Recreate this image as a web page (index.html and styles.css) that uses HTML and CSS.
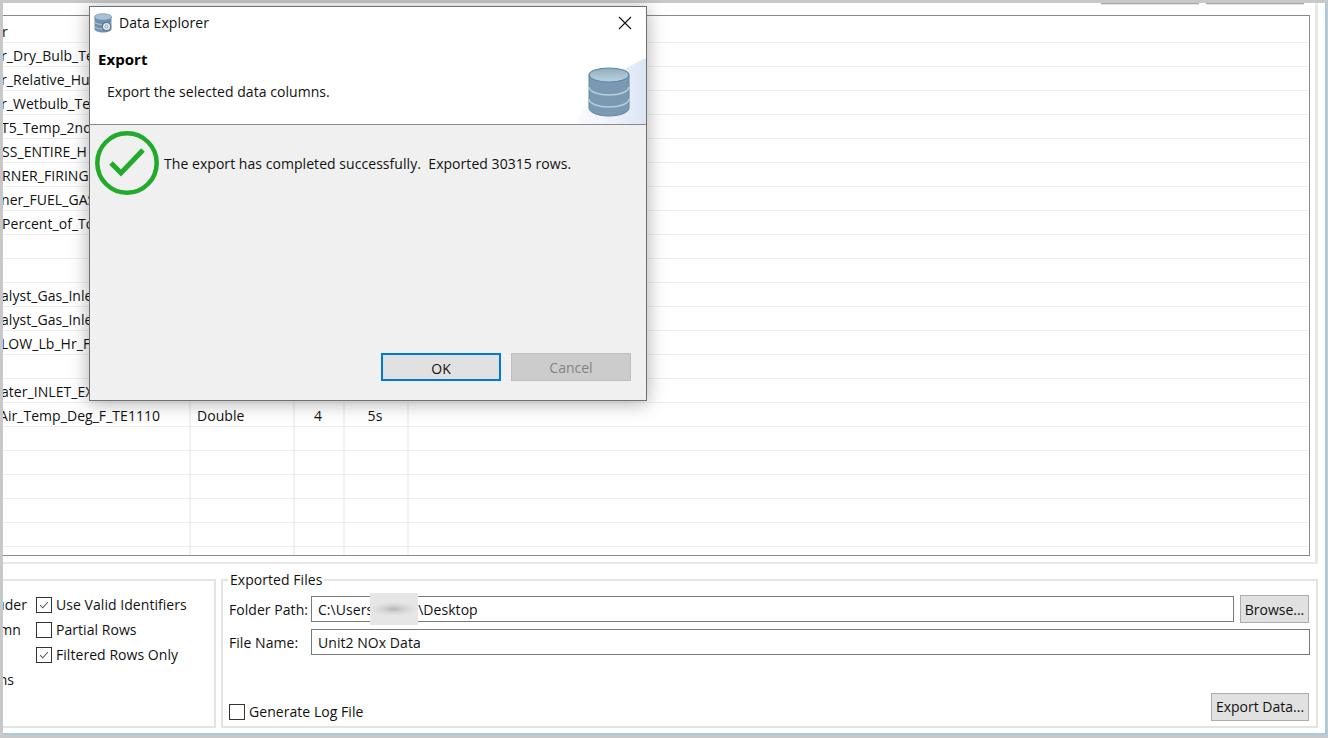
FILE: index.html
```html
<!DOCTYPE html>
<html lang="en">
<head>
<meta charset="utf-8">
<title>Data Explorer</title>
<link rel="stylesheet" href="styles.css">
</head>
<body>
<div class="window">
  <section class="upper">
    <div class="toolbar"><span class="tool-btn"></span><span class="tool-btn"></span></div>
    <div class="table">
      <div class="row"><div class="cell name">r</div><div class="cell"></div><div class="cell"></div><div class="cell"></div></div>
      <div class="row"><div class="cell name cut">r_Dry_Bulb_Te</div><div class="cell"></div><div class="cell"></div><div class="cell"></div></div>
      <div class="row"><div class="cell name cut">r_Relative_Hu</div><div class="cell"></div><div class="cell"></div><div class="cell"></div></div>
      <div class="row"><div class="cell name cut">r_Wetbulb_Te</div><div class="cell"></div><div class="cell"></div><div class="cell"></div></div>
      <div class="row"><div class="cell name cut">T5_Temp_2nd</div><div class="cell"></div><div class="cell"></div><div class="cell"></div></div>
      <div class="row"><div class="cell name">SS_ENTIRE_H</div><div class="cell"></div><div class="cell"></div><div class="cell"></div></div>
      <div class="row"><div class="cell name">RNER_FIRING</div><div class="cell"></div><div class="cell"></div><div class="cell"></div></div>
      <div class="row"><div class="cell name cut">ner_FUEL_GAS</div><div class="cell"></div><div class="cell"></div><div class="cell"></div></div>
      <div class="row"><div class="cell name">Percent_of_To</div><div class="cell"></div><div class="cell"></div><div class="cell"></div></div>
      <div class="row"><div class="cell name"></div><div class="cell"></div><div class="cell"></div><div class="cell"></div></div>
      <div class="row"><div class="cell name"></div><div class="cell"></div><div class="cell"></div><div class="cell"></div></div>
      <div class="row"><div class="cell name cut">alyst_Gas_Inle</div><div class="cell"></div><div class="cell"></div><div class="cell"></div></div>
      <div class="row"><div class="cell name cut">alyst_Gas_Inle</div><div class="cell"></div><div class="cell"></div><div class="cell"></div></div>
      <div class="row"><div class="cell name cut">LOW_Lb_Hr_F</div><div class="cell"></div><div class="cell"></div><div class="cell"></div></div>
      <div class="row"><div class="cell name"></div><div class="cell"></div><div class="cell"></div><div class="cell"></div></div>
      <div class="row"><div class="cell name cut">ater_INLET_EX</div><div class="cell"></div><div class="cell"></div><div class="cell"></div></div>
      <div class="row"><div class="cell name cut-more">Air_Temp_Deg_F_TE1110</div><div class="cell type">Double</div><div class="cell center">4</div><div class="cell center">5s</div></div>
      <div class="row"><div class="cell name"></div><div class="cell"></div><div class="cell"></div><div class="cell"></div></div>
      <div class="row"><div class="cell name"></div><div class="cell"></div><div class="cell"></div><div class="cell"></div></div>
      <div class="row"><div class="cell name"></div><div class="cell"></div><div class="cell"></div><div class="cell"></div></div>
      <div class="row"><div class="cell name"></div><div class="cell"></div><div class="cell"></div><div class="cell"></div></div>
      <div class="row"><div class="cell name"></div><div class="cell"></div><div class="cell"></div><div class="cell"></div></div>
      <div class="row filler"><div class="cell name"></div><div class="cell"></div><div class="cell"></div><div class="cell"></div></div>
    </div>
  </section>

  <section class="lower">
    <div class="group options">
      <div class="option-row"><span class="clip-label">uder</span><label class="check"><span class="box"><svg viewBox="0 0 16 16" class="tick"><path d="M3.5 8.2 6.6 11.2 12.5 4.6"/></svg></span>Use Valid Identifiers</label></div>
      <div class="option-row"><span class="clip-label pad-m">mn</span><label class="check"><span class="box"></span>Partial Rows</label></div>
      <div class="option-row"><span class="clip-label"></span><label class="check"><span class="box"><svg viewBox="0 0 16 16" class="tick"><path d="M3.5 8.2 6.6 11.2 12.5 4.6"/></svg></span>Filtered Rows Only</label></div>
      <div class="option-row"><span class="clip-label pad-n">ns</span></div>
    </div>
    <fieldset class="group files">
      <legend>Exported Files</legend>
      <div class="file-grid">
        <span class="file-label">Folder Path:</span>
        <div class="input folder"><span class="input-text">C:\Users</span><span class="smudge"></span><span class="input-text">\Desktop</span></div>
        <button class="btn browse" type="button">Browse...</button>
        <span class="file-label">File Name:</span>
        <div class="input wide"><span class="input-text">Unit2 NOx Data</span></div>
      </div>
      <div class="file-foot">
        <label class="check"><span class="box"></span>Generate Log File</label>
        <button class="btn export" type="button">Export Data...</button>
      </div>
    </fieldset>
  </section>
</div>

<div class="dialog">
  <div class="titlebar">
    <svg class="app-icon" viewBox="0 0 18 20">
      <path d="M0.500 4v12c0 1.800 3.600 3.500 8.500 3.500s8.500-1.700 8.500-3.500V4z" fill="#6f93ad"/>
      <ellipse cx="9" cy="4" rx="8.500" ry="3.300" fill="#a9c2d3" stroke="#5f839e" stroke-width=".6"/>
      <path d="M0.500 8.500c0 1.800 3.600 3 8.500 3s8.500-1.200 8.500-3M0.500 13c0 1.800 3.600 3 8.500 3s8.500-1.200 8.500-3" fill="none" stroke="#c3d4df" stroke-width=".8"/>
      <circle cx="12.500" cy="13.500" r="4.200" fill="#e8eef2" stroke="#55798f" stroke-width="1.200"/>
      <circle cx="12.500" cy="13.500" r="1.500" fill="#fff" stroke="#55798f" stroke-width=".8"/>
    </svg>
    <span class="title">Data Explorer</span>
    <svg class="close" viewBox="0 0 14 14"><path d="M1 1 13 13M13 1 1 13"/></svg>
  </div>
  <header class="banner">
    <svg class="swoosh" viewBox="0 0 70 66">
      <defs><linearGradient id="sw" x1="0" y1="0" x2="1" y2="0"><stop offset="0" stop-color="#fbfbfd"/><stop offset=".6" stop-color="#ebeff8"/><stop offset="1" stop-color="#dde5f5"/></linearGradient></defs>
      <path d="M0 66C10 40 30 18 70 0V66z" fill="url(#sw)"/>
    </svg>
    <svg class="db" viewBox="0 0 42 50">
      <defs><linearGradient id="top" x1="0" y1="0" x2="0" y2="1"><stop offset="0" stop-color="#8fadc0"/><stop offset="1" stop-color="#bcd2de"/></linearGradient></defs>
      <path d="M1 8v33c0 4.500 9 8 20 8s20-3.500 20-8V8z" fill="#7a9ab2" stroke="#5f86a3"/>
      <ellipse cx="21" cy="8" rx="20" ry="7" fill="url(#top)" stroke="#5f86a3" stroke-width="1.200"/>
      <path d="M1 20c0 4.500 9 8 20 8s20-3.500 20-8M1 32c0 4.500 9 8 20 8s20-3.500 20-8" fill="none" stroke="#b9cfdc" stroke-width="1.500"/>
    </svg>
    <h1>Export</h1>
    <p>Export the selected data columns.</p>
  </header>
  <div class="dialog-body">
    <div class="message">
      <svg class="ok-icon" viewBox="0 0 64 64">
        <circle cx="32" cy="32" r="29.700" fill="none" stroke="#22aa2a" stroke-width="4.500"/>
        <path d="M16 32 26 42 48 19" fill="none" stroke="#22aa2a" stroke-width="5"/>
      </svg>
      <span>The export has completed successfully.&nbsp; Exported 30315 rows.</span>
    </div>
    <div class="dialog-actions">
      <button class="btn primary" type="button">OK</button>
      <button class="btn disabled" type="button">Cancel</button>
    </div>
  </div>
</div>
</body>
</html>
```
FILE: styles.css
```css
* { box-sizing: border-box; }
html, body { margin: 0; height: 100%; }
body {
  width: 1328px;
  height: 738px;
  overflow: hidden;
  position: relative;
  background: #c8c8c8;
  padding: 3px 0 3px 3px;
  font-family: "Open Sans", "Noto Sans", sans-serif;
  font-size: 14px;
  letter-spacing: .05px;
  color: #111;
}
.window {
  width: 1324px;
  height: 732px;
  background: #fff;
  border-right: 2px solid #a9c9e2;
  border-bottom: 2px solid #a9c9e2;
  display: flex;
  flex-direction: column;
  overflow: hidden;
}
.upper {
  width: 1315px;
  height: 561px;
  border-right: 3px solid #e8e8e8;
  border-bottom: 2px solid #e8e8e8;
  display: flex;
  flex-direction: column;
}
.toolbar {
  height: 12px;
  display: flex;
  justify-content: flex-end;
  gap: 7px;
  padding-right: 11px;
}
.tool-btn {
  width: 98px;
  height: 2px;
  background: #a8a8a8;
  border-bottom: 1px solid #e4e4e4;
}
.table {
  width: 1307px;
  flex: 1;
  border-top: 1px solid #88888e;
  border-right: 1px solid #88888e;
  border-bottom: 1px solid #88888e;
  padding-top: 3px;
  overflow: hidden;
  margin-bottom: 6px;
}
.row {
  display: grid;
  grid-template-columns: 188px 104px 50px 64px 1fr;
  height: 24px;
  border-bottom: 1px solid #ededed;
  line-height: 23px;
}
.row.filler { height: 8px; border-bottom: 0; }
.cell {
  border-right: 2px solid #eff2f6;
  white-space: nowrap;
  overflow: hidden;
  padding-top: 1px;
}
.cell.type { padding-left: 6px; }
.cell.center { text-align: center; padding-right: 2px; }
.name { text-indent: -1px; }
.cut { text-indent: -2px; }
.cut-more { text-indent: -4px; }
.lower {
  display: flex;
  gap: 5px;
  padding-top: 15px;
  height: 170px;
}
.group {
  border: 2px solid #e4e4e4;
  margin: 0;
  background: #fff;
}
.options {
  width: 213px;
  height: 149px;
  border-left: 0;
  padding-top: 11px;
}
.option-row {
  display: grid;
  grid-template-columns: 33px 1fr;
  height: 25px;
  align-items: center;
}
.clip-label {
  display: flex;
  justify-content: flex-end;
  white-space: nowrap;
  overflow: hidden;
  padding-right: 9px;
}
.clip-label.pad-m { padding-right: 15px; }
.clip-label.pad-n { padding-right: 22px; }
.check {
  display: flex;
  align-items: center;
  gap: 4px;
  white-space: nowrap;
}
.box {
  width: 16px;
  height: 16px;
  border: 1px solid #333;
  background: #fff;
  display: block;
}
.tick { display: block; width: 14px; height: 14px; fill: none; stroke: #555; stroke-width: 1.200; }
.files {
  flex: none;
  width: 1097px;
  height: 158px;
  margin-top: -9px;
  padding: 0 6px 5px 6px;
  display: flex;
  flex-direction: column;
}
.files legend {
  padding: 0 2px;
  margin-left: -1px;
  line-height: 19px;
}
.file-grid {
  display: grid;
  grid-template-columns: 82px 1fr 70px;
  row-gap: 7px;
  align-items: center;
  padding-top: 7px;
}
.input {
  height: 26px;
  border: 1px solid #7a7a7a;
  background: #fff;
  display: flex;
  align-items: center;
  padding-left: 6px;
  position: relative;
}
.folder { margin-right: 6px; }
.wide { grid-column: 2 / 4; }
.input-text { white-space: nowrap; }
.smudge {
  width: 48px;
  height: 32px;
  margin: 0 0 0 -3px;
  flex: none;
  background: radial-gradient(ellipse 50% 22% at 50% 50%, #b7b7b7 0%, #d8d8d8 55%, #e6e6e6 100%);
}
.btn {
  font: inherit;
  color: inherit;
  background: #e1e1e1;
  border: 1px solid #adadad;
  padding: 2px 0 0;
  height: 28px;
  line-height: 24px;
}
.browse { width: 69px; margin: -1px 0; }
.export { width: 98px; padding-top: 0; }
.file-foot {
  margin-top: auto;
  display: flex;
  align-items: flex-end;
  justify-content: space-between;
  padding-right: 1px;
}
.dialog {
  position: absolute;
  left: 89px;
  top: 6px;
  width: 558px;
  height: 395px;
  border: 1px solid #6f6f6f;
  background: #f0f0f0;
  box-shadow: 0 2px 18px rgba(0, 0, 0, .32);
  display: flex;
  flex-direction: column;
}
.titlebar {
  height: 31px;
  background: #fff;
  display: flex;
  align-items: center;
  padding: 0 14px 0 4px;
  gap: 7px;
}
.app-icon { width: 18px; height: 20px; flex: none; }
.title { flex: 1; font-size: 14px; }
.close { width: 14px; height: 14px; fill: none; stroke: #111; stroke-width: 1.100; }
.banner {
  height: 87px;
  background: #fff;
  border-bottom: 1px solid #8a8a8a;
  padding: 11px 0 0 8px;
  position: relative;
  overflow: hidden;
}
.banner h1 {
  margin: 0;
  font-size: 15px;
  line-height: 21px;
  font-weight: 700;
  color: #000;
}
.banner p {
  margin: 11px 0 0 9px;
  line-height: 22px;
}
.swoosh { position: absolute; right: 0; bottom: 0; width: 70px; height: 66px; }
.db { position: absolute; left: 498px; top: 29px; width: 42px; height: 50px; }
.dialog-body {
  flex: 1;
  display: flex;
  flex-direction: column;
  justify-content: space-between;
  padding: 6px 15px 19px 5px;
}
.message { display: flex; align-items: center; gap: 5px; }
.ok-icon { width: 64px; height: 64px; flex: none; }
.dialog-actions { display: flex; justify-content: flex-end; gap: 10px; }
.dialog-actions .btn { width: 120px; }
.primary { border: 2px solid #0078d7; }
.disabled { background: #cccccc; border-color: #bfbfbf; color: #838383; }
```
